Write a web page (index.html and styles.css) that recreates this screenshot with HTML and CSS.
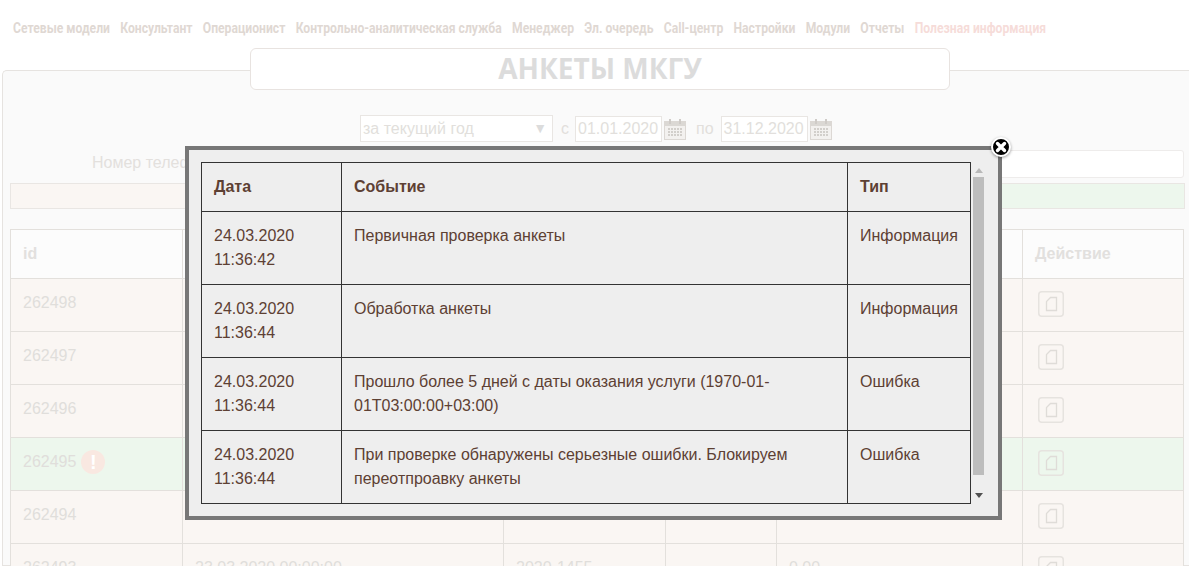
FILE: index.html
```html
<!DOCTYPE html>
<html lang="ru">
<head>
<meta charset="utf-8">
<title>Анкеты МКГУ</title>
<link rel="stylesheet" href="styles.css">
</head>
<body>
<svg class="defs" width="0" height="0">
  <symbol id="cal" viewBox="0 0 22 22">
    <rect x="0.5" y="3.5" width="21" height="18" fill="#f3f1ef" stroke="#dcd8d4"/>
    <rect x="1" y="4" width="20" height="4" fill="#dbd8d4"/>
    <rect x="5" y="1" width="2" height="5" fill="#cfcbc7"/>
    <rect x="15" y="1" width="2" height="5" fill="#cfcbc7"/>
    <path d="M4 11h14M4 14h14M4 17h14" stroke="#d2cfcb" stroke-width="2" stroke-dasharray="2 1"/>
  </symbol>
  <symbol id="doc" viewBox="0 0 26 26">
    <rect x="0.75" y="0.75" width="24.5" height="24.5" rx="3" fill="none" stroke="#e6e3df" stroke-width="1.5"/>
    <path d="M8.5 19.5V10.5L12.5 6.5H18.5V19.5Z" fill="none" stroke="#dfdcd8" stroke-width="1.3"/>
  </symbol>
</svg>
<nav class="nav">
  <a>Сетевые модели</a><a>Консультант</a><a>Операционист</a><a>Контрольно-аналитическая служба</a><a>Менеджер</a><a>Эл. очередь</a><a>Call-центр</a><a>Настройки</a><a>Модули</a><a>Отчеты</a><a class="nav-hot">Полезная информация</a>
</nav>
<main class="panel">
  <h1 class="title">АНКЕТЫ МКГУ</h1>
  <div class="filters">
    <div class="select"><span>за текущий год</span><span class="select-arrow">▼</span></div>
    <span class="flabel">с</span>
    <div class="field">01.01.2020</div>
    <svg class="cal"><use href="#cal"/></svg>
    <span class="flabel flabel-to">по</span>
    <div class="field">31.12.2020</div>
    <svg class="cal"><use href="#cal"/></svg>
  </div>
  <div class="search">
    <span class="search-label">Номер телефона</span>
    <div class="search-input"></div>
  </div>
  <div class="strip"><div class="strip-a"></div><div class="strip-b"></div></div>
  <table class="grid">
    <colgroup><col class="c1"><col class="c2"><col class="c3"><col class="c4"><col class="c5"><col class="c6"></colgroup>
    <thead><tr><th>id</th><th></th><th></th><th></th><th></th><th>Действие</th></tr></thead>
    <tbody>
      <tr><td>262498</td><td></td><td></td><td></td><td></td><td><svg class="doc"><use href="#doc"/></svg></td></tr>
      <tr><td>262497</td><td></td><td></td><td></td><td></td><td><svg class="doc"><use href="#doc"/></svg></td></tr>
      <tr><td>262496</td><td></td><td></td><td></td><td></td><td><svg class="doc"><use href="#doc"/></svg></td></tr>
      <tr class="ok"><td>262495<span class="warn">!</span></td><td></td><td></td><td></td><td></td><td><svg class="doc"><use href="#doc"/></svg></td></tr>
      <tr><td>262494</td><td></td><td></td><td></td><td></td><td><svg class="doc"><use href="#doc"/></svg></td></tr>
      <tr><td>262493</td><td>23.03.2020 00:00:00</td><td>2020-1455</td><td></td><td>0.00</td><td><svg class="doc"><use href="#doc"/></svg></td></tr>
    </tbody>
  </table>
</main>
<section class="modal">
  <div class="modal-body">
    <table class="log">
      <colgroup><col class="l1"><col class="l2"><col class="l3"></colgroup>
      <thead><tr><th>Дата</th><th>Событие</th><th>Тип</th></tr></thead>
      <tbody>
        <tr><td>24.03.2020<br>11:36:42</td><td>Первичная проверка анкеты</td><td>Информация</td></tr>
        <tr><td>24.03.2020<br>11:36:44</td><td>Обработка анкеты</td><td>Информация</td></tr>
        <tr><td>24.03.2020<br>11:36:44</td><td>Прошло более 5 дней с даты оказания услуги (1970-01-01T03:00:00+03:00)</td><td>Ошибка</td></tr>
        <tr><td>24.03.2020<br>11:36:44</td><td>При проверке обнаружены серьезные ошибки. Блокируем переотпроавку анкеты</td><td>Ошибка</td></tr>
      </tbody>
    </table>
    <div class="scroll">
      <i class="arrow-up"></i>
      <div class="thumb"></div>
      <i class="arrow-down"></i>
    </div>
  </div>
  <button class="close" aria-label="Закрыть">
    <svg width="12" height="12" viewBox="0 0 12 12"><path d="M2.5 2.5l7 7M9.5 2.5l-7 7" stroke="#fff" stroke-width="3.4" stroke-linecap="round"/></svg>
  </button>
</section>
</body>
</html>
```
FILE: styles.css
```css
html, body {
  margin: 0;
  height: 566px;
  overflow: hidden;
  background: #fff;
}
body {
  font-family: "Liberation Sans", Arial, sans-serif;
  font-size: 16px;
  color: #dedbd8;
}
.defs { position: absolute; }
.nav {
  display: flex;
  gap: 12.7px;
  width: 1189px;
  height: 48px;
  padding: 20px 0 0 13px;
  box-sizing: border-box;
  font-family: "Roboto", sans-serif;
  font-weight: 700;
  font-size: 15px;
  line-height: 17px;
  color: #dfd8d3;
  white-space: nowrap;
  transform: scaleX(.81);
  transform-origin: 13px 0;
}
.nav-hot { color: #f6dcd9; }
.panel {
  width: 1187px;
  height: 496px;
  margin: 22px 0 0 2px;
  background: #fafafa;
  border: 1px solid #e6e3e0;
  border-right: 0;
  border-radius: 5px 0 0 0;
  box-sizing: border-box;
}
.title {
  width: 700px;
  height: 42px;
  margin: -23px 0 0 247px;
  box-sizing: border-box;
  background: #fff;
  border: 1px solid #e8e3e0;
  border-radius: 6px;
  text-align: center;
  font-family: "Open Sans", sans-serif;
  font-size: 28px;
  font-weight: 700;
  line-height: 38px;
  color: #dcdcdc;
}
.filters {
  display: flex;
  align-items: center;
  height: 27px;
  margin-top: 25px;
  padding-left: 357px;
}
.select {
  width: 193px;
  height: 27px;
  box-sizing: border-box;
  border: 1px solid #e9e6e3;
  background: #fff;
  display: flex;
  justify-content: space-between;
  align-items: center;
  padding: 0 5px 0 2px;
  line-height: 25px;
  color: #e2dfdc;
}
.select-arrow { font-size: 14px; color: #dcdcdc; }
.flabel { margin: 0 6px 0 8px; color: #e2dfdc; }
.flabel-to { margin: 0 7px 0 10px; }
.field {
  width: 87px;
  height: 26px;
  box-sizing: border-box;
  border: 1px solid #e9e6e3;
  background: #fff;
  padding-left: 2px;
  line-height: 24px;
  color: #e2dfdc;
}
.cal { width: 22px; height: 22px; margin-left: 2px; }
.search {
  display: flex;
  align-items: center;
  height: 28px;
  margin-top: 8px;
}
.search-label { margin: 0 0 3px 89px; width: 600px; color: #e3e0dd; }
.search-input {
  width: 492px;
  height: 28px;
  box-sizing: border-box;
  background: #fff;
  border: 1px solid #eeeceb;
  border-radius: 3px;
}
.strip {
  display: flex;
  width: 1175px;
  height: 26px;
  margin: 5px 0 0 7px;
  box-sizing: border-box;
  border: 1px solid #e9e6e3;
}
.strip-a { flex: 1; background: #faf6f3; }
.strip-b { flex: 1; background: #edf7ed; }
.grid {
  table-layout: fixed;
  border-collapse: collapse;
  width: 1173px;
  margin: 20px 0 0 7px;
}
.c1 { width: 172px; }
.c2 { width: 321px; }
.c3 { width: 162px; }
.c4 { width: 111px; }
.c5 { width: 246px; }
.c6 { width: 161px; }
.grid th, .grid td {
  border: 1px solid #e3e0dc;
  padding: 12px;
  text-align: left;
  vertical-align: top;
  line-height: 24px;
}
.grid th { height: 24px; font-weight: 700; color: #e2e0de; background: #fcfcfc; }
.grid td { height: 28px; background: #faf6f3; color: #e0dedb; }
.grid .ok td { background: #edf7ed; }
.warn {
  display: inline-block;
  width: 24px;
  height: 24px;
  margin-left: 5px;
  border-radius: 50%;
  background: #f9e8e1;
  color: #fff;
  font-weight: 700;
  font-size: 20px;
  text-align: center;
  vertical-align: top;
}
.doc { display: block; width: 26px; height: 26px; margin: 0 0 0 3px; }
.modal {
  position: absolute;
  left: 185px;
  top: 146px;
  width: 817px;
  height: 374px;
  box-sizing: border-box;
  border: 4px solid #777;
  background: #eee;
}
.modal-body {
  display: flex;
  align-items: flex-start;
  padding: 12px 0 0 12px;
}
.log {
  table-layout: fixed;
  border-collapse: collapse;
  width: 769px;
  color: #5d4033;
}
.l1 { width: 140px; }
.l2 { width: 506px; }
.l3 { width: 123px; }
.log th, .log td {
  border: 1px solid #333;
  padding: 12px;
  text-align: left;
  vertical-align: top;
  line-height: 24px;
}
.log th { font-weight: 700; }
.scroll {
  display: flex;
  flex-direction: column;
  align-items: center;
  width: 11px;
  margin-left: 2px;
  padding-top: 6px;
}
.thumb { width: 11px; height: 298px; margin-top: 4px; background: #bdbdbd; }
.arrow-up, .arrow-down { width: 0; height: 0; border: 4px solid transparent; }
.arrow-up { border-top: 0; border-bottom: 5px solid #b9b9b9; }
.arrow-down { margin-top: 18px; border-bottom: 0; border-top: 5px solid #505050; }
.close {
  position: absolute;
  right: -13px;
  top: -13px;
  padding: 0;
  display: flex;
  align-items: center;
  justify-content: center;
  background: #000;
  border: 2px solid #fff;
  box-sizing: content-box;
  width: 16px;
  height: 16px;
  border-radius: 50%;
  box-shadow: 0 1px 3px rgba(0,0,0,.4);
}
```
